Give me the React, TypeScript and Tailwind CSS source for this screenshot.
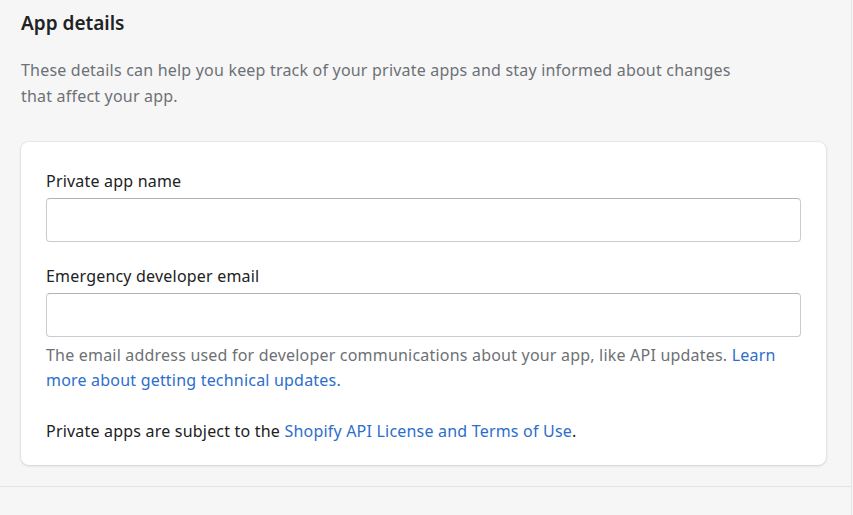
import React from "react";

const font = { fontFamily: '"Segoe UI", "Noto Sans", "Liberation Sans", sans-serif' };

function Field({label}: { label: string }) {
    return (
        <div className="flex flex-col">
            <label className="text-[16px] leading-[25px] text-[#202223]">{label}</label>
            <input
                type="text"
                className="mt-[4px] h-[44px] w-full rounded-[4px] border border-[#c9cccf] border-t-[#aeb4b9] bg-white px-3 outline-none"
            />
        </div>
    );
}

export default function App() {
    return (
        <div className="min-h-[515px] w-[853px] bg-[#f6f6f7] tracking-[0.2px]" style={font}>
            <div className="w-[852px] border-r border-[#e1e3e5] min-h-[515px]">
                <div className="px-[21px] pt-[8px]">
                    <h2 className="text-[19px] leading-[30px] font-semibold tracking-normal text-[#202223]">App details</h2>
                    <p className="mt-[19px] w-[740px] text-[16px] leading-[26px] text-[#6d7175]">
                        These details can help you keep track of your private apps and stay informed about changes
                        that affect your app.
                    </p>
                    <div
                        className="mt-[33px] w-[805px] rounded-[8px] bg-white px-[25px] pt-[27px] pb-[21px] shadow-[0_0_0_1px_rgba(63,63,68,0.05),0_1px_3px_0_rgba(63,63,68,0.15)]">
                        <Field label="Private app name"/>
                        <div className="mt-[22px]">
                            <Field label="Emergency developer email"/>
                        </div>
                        <p className="mt-[6px] text-[16px] leading-[25px] text-[#6d7175]">
                            The email address used for developer communications about your app, like API updates.{" "}
                            <a href="#" className="text-[#2c6ecb]">Learn more about getting technical updates.</a>
                        </p>
                        <p className="mt-[26px] text-[16px] leading-[25px] text-[#202223]">
                            Private apps are subject to the{" "}
                            <a href="#" className="text-[#2c6ecb]">Shopify API License and Terms of Use</a>.
                        </p>
                    </div>
                </div>
                <div className="mt-[21px] border-t border-[#e1e3e5]"/>
            </div>
        </div>
    );
}
